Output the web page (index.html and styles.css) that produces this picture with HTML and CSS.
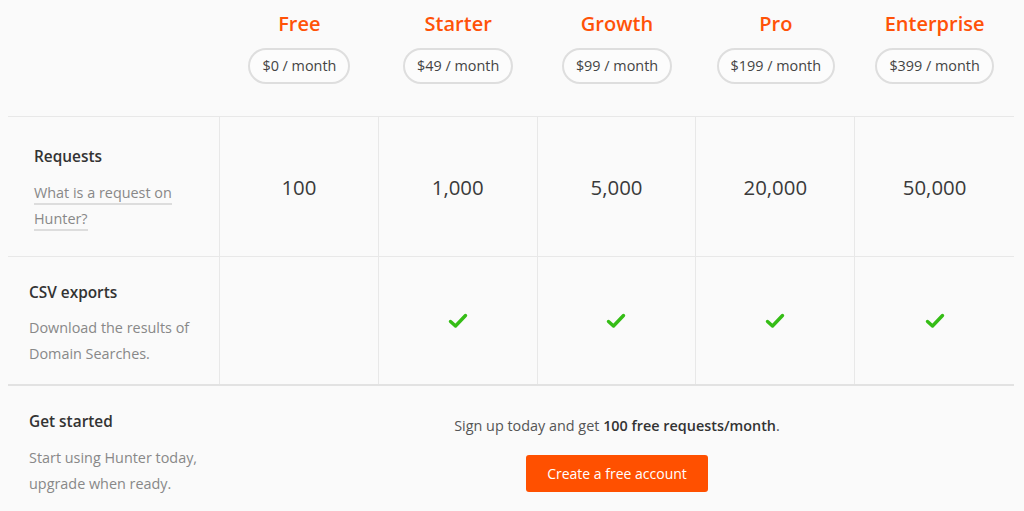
FILE: index.html
```html
<!DOCTYPE html>
<html lang="en">
<head>
<meta charset="utf-8">
<title>Pricing</title>
<link rel="stylesheet" href="styles.css">
</head>
<body>
<div class="pricing">
  <div class="row head">
    <div class="label"></div>
    <div class="plan"><div class="plan-name">Free</div><div class="pill">$0 / month</div></div>
    <div class="plan"><div class="plan-name">Starter</div><div class="pill">$49 / month</div></div>
    <div class="plan"><div class="plan-name">Growth</div><div class="pill">$99 / month</div></div>
    <div class="plan"><div class="plan-name">Pro</div><div class="pill">$199 / month</div></div>
    <div class="plan"><div class="plan-name">Enterprise</div><div class="pill">$399 / month</div></div>
  </div>

  <div class="row feature requests">
    <div class="label label-wide">
      <div class="title">Requests</div>
      <div class="desc"><a class="link" href="#">What is a request on</a><br><a class="link" href="#">Hunter?</a></div>
    </div>
    <div class="cell num">100</div>
    <div class="cell num">1,000</div>
    <div class="cell num">5,000</div>
    <div class="cell num">20,000</div>
    <div class="cell num">50,000</div>
  </div>

  <div class="row feature csv">
    <div class="label">
      <div class="title">CSV exports</div>
      <div class="desc">Download the results of<br>Domain Searches.</div>
    </div>
    <div class="cell"></div>
    <div class="cell"><svg class="check" viewBox="0 0 20 16" width="20" height="16"><polyline points="2.5,8.5 7.5,13 17.5,2.5" fill="none" stroke="#35bd16" stroke-width="3.4" stroke-linecap="round" stroke-linejoin="round"/></svg></div>
    <div class="cell"><svg class="check" viewBox="0 0 20 16" width="20" height="16"><polyline points="2.5,8.5 7.5,13 17.5,2.5" fill="none" stroke="#35bd16" stroke-width="3.4" stroke-linecap="round" stroke-linejoin="round"/></svg></div>
    <div class="cell"><svg class="check" viewBox="0 0 20 16" width="20" height="16"><polyline points="2.5,8.5 7.5,13 17.5,2.5" fill="none" stroke="#35bd16" stroke-width="3.4" stroke-linecap="round" stroke-linejoin="round"/></svg></div>
    <div class="cell"><svg class="check" viewBox="0 0 20 16" width="20" height="16"><polyline points="2.5,8.5 7.5,13 17.5,2.5" fill="none" stroke="#35bd16" stroke-width="3.4" stroke-linecap="round" stroke-linejoin="round"/></svg></div>
  </div>

  <div class="row footer">
    <div class="label">
      <div class="title">Get started</div>
      <div class="desc">Start using Hunter today,<br>upgrade when ready.</div>
    </div>
    <div class="cta">
      <p class="cta-text">Sign up today and get <strong>100 free requests/month</strong>.</p>
      <a class="btn" href="#">Create a free account</a>
    </div>
  </div>
</div>
</body>
</html>
```

FILE: styles.css
```css
* { box-sizing: border-box; }
html, body { margin: 0; padding: 0; background: #fafafa; }
body {
  font-family: "Open Sans", "Liberation Sans", sans-serif;
  color: #333;
  padding: 0 10px 0 8px;
}
.pricing { width: 1006px; }
.row {
  display: grid;
  grid-template-columns: 212px repeat(5, 1fr);
}
.head { padding: 10px 0 32px; }
.plan { display: flex; flex-direction: column; align-items: center; }
.plan-name {
  color: #ff5208;
  font-size: 20px;
  font-weight: 600;
  line-height: 28px;
  margin-bottom: 10px;
}
.pill {
  height: 36px;
  line-height: 32px;
  padding: 0 12px;
  border: 2px solid #dedede;
  border-radius: 18px;
  font-size: 14.4px;
  color: #444;
  background: #fcfcfc;
}
.feature { border-top: 1px solid #e8e8e8; }
.requests { height: 140px; }
.csv { height: 130px; border-bottom: 2px solid #e2e2e2; }
.label {
  display: flex;
  flex-direction: column;
  justify-content: center;
  padding-left: 21px;
}
.label-wide { padding-left: 26px; }
.requests .label { padding-top: 4px; }
.csv .label { padding-top: 8px; }
.feature .label { border-right: 1px solid #e8e8e8; }
.title { font-size: 15.4px; font-weight: 600; line-height: 22px; color: #333; }
.desc { font-size: 14.4px; line-height: 26px; color: #888; margin-top: 11px; }
.requests .desc { margin-top: 12px; }
.link { color: #888; text-decoration: none; border-bottom: 2px solid #ddd; padding-bottom: 1px; }
.cell {
  display: flex;
  align-items: center;
  justify-content: center;
  border-right: 1px solid #e8e8e8;
}
.cell:last-child { border-right: 0; }
.num { font-size: 20.4px; color: #3a3a3a; }
.check { display: block; margin-top: 1px; }
.footer { padding: 25px 0 12px; }
.footer .label { justify-content: flex-start; }
.footer .desc { margin-top: 12px; }
.cta {
  grid-column: 2 / 7;
  display: flex;
  flex-direction: column;
  align-items: center;
}
.cta-text { margin: 4px 0 18px; font-size: 14.4px; line-height: 22px; color: #555; }
.cta-text strong { color: #333; font-weight: 600; }
.btn {
  display: block;
  background: #ff5000;
  color: #fff;
  text-decoration: none;
  font-size: 14px;
  line-height: 37px;
  height: 37px;
  padding: 0 21px;
  border-radius: 3px;
}
```
